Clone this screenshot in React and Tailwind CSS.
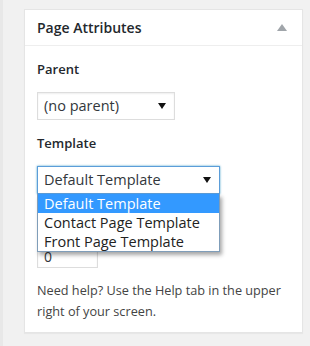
import React from 'react';

const font = { fontFamily: '"Open Sans", "Noto Sans", sans-serif' };

const Arrow = () => (
  <svg className="w-[8px] h-[8px]" viewBox="0 0 8 8">
    <path d="M0 1h8L4 7z" fill="#111" />
  </svg>
);

const SelectBox = ({ value, width, focused }) => (
  <div
    className={`flex items-center justify-between h-[28px] pl-[6px] pr-[8px] bg-white text-[14.5px] text-[#32373c] border ${
      focused ? 'border-[#5b9dd9] shadow-[0_0_2px_rgba(30,140,190,0.8)]' : 'border-[#ddd] shadow-[inset_0_1px_2px_rgba(0,0,0,0.07)]'
    }`}
    style={{ width }}
  >
    <span>{value}</span>
    <Arrow />
  </div>
);

export default function App() {
  const options = ['Default Template', 'Contact Page Template', 'Front Page Template'];

  return (
    <div className="w-[310px] h-[346px] bg-[#f1f1f1] border-l-[3px] border-[#e8e8e8] pt-[9px] pl-[21px]" style={font}>
      <div className="w-[279px] h-[324px] bg-white border border-[#e5e5e5] shadow-[0_1px_1px_rgba(0,0,0,0.04)]">
        <div className="h-[36px] flex items-center justify-between pl-[12px] pr-[15px] border-b border-[#eee]">
          <h2 className="text-[14px] font-semibold text-[#23282d]">Page Attributes</h2>
          <svg className="w-[10px] h-[7px]" viewBox="0 0 10 7">
            <path d="M5 0l5 7H0z" fill="#a0a5aa" />
          </svg>
        </div>

        <div className="relative px-[12px]">
          <p className="mt-[14px] h-[18px] leading-[18px] text-[13px] font-semibold text-[#23282d]">Parent</p>
          <div className="mt-[14px]">
            <SelectBox value="(no parent)" width={138} />
          </div>

          <p className="mt-[14px] h-[18px] leading-[18px] text-[13px] font-semibold text-[#23282d]">Template</p>
          <div className="relative mt-[14px]">
            <SelectBox value="Default Template" width={183} focused />
            <ul className="absolute left-0 top-[28px] z-10 w-[183px] bg-white border border-[#7f9db9] border-t-0 shadow-[2px_3px_4px_rgba(0,0,0,0.35)] text-[14.5px] text-[#222]">
              {options.map((o, i) => (
                <li
                  key={o}
                  className={`h-[19px] leading-[19px] pl-[6px] ${i === 0 ? 'bg-[#3399ff] text-white' : ''}`}
                >
                  {o}
                </li>
              ))}
            </ul>
          </div>

          <div className="mt-[46px] w-[61px] h-[28px] border border-[#ddd] bg-white flex items-end pl-[6px] pb-[2px] text-[14px] leading-[16px] text-[#32373c] shadow-[inset_0_1px_2px_rgba(0,0,0,0.07)]">
            0
          </div>

          <p className="mt-[12px] text-[12.7px] leading-[21px] text-[#444]">
            Need help? Use the Help tab in the upper right of your screen.
          </p>
        </div>
      </div>
    </div>
  );
}
